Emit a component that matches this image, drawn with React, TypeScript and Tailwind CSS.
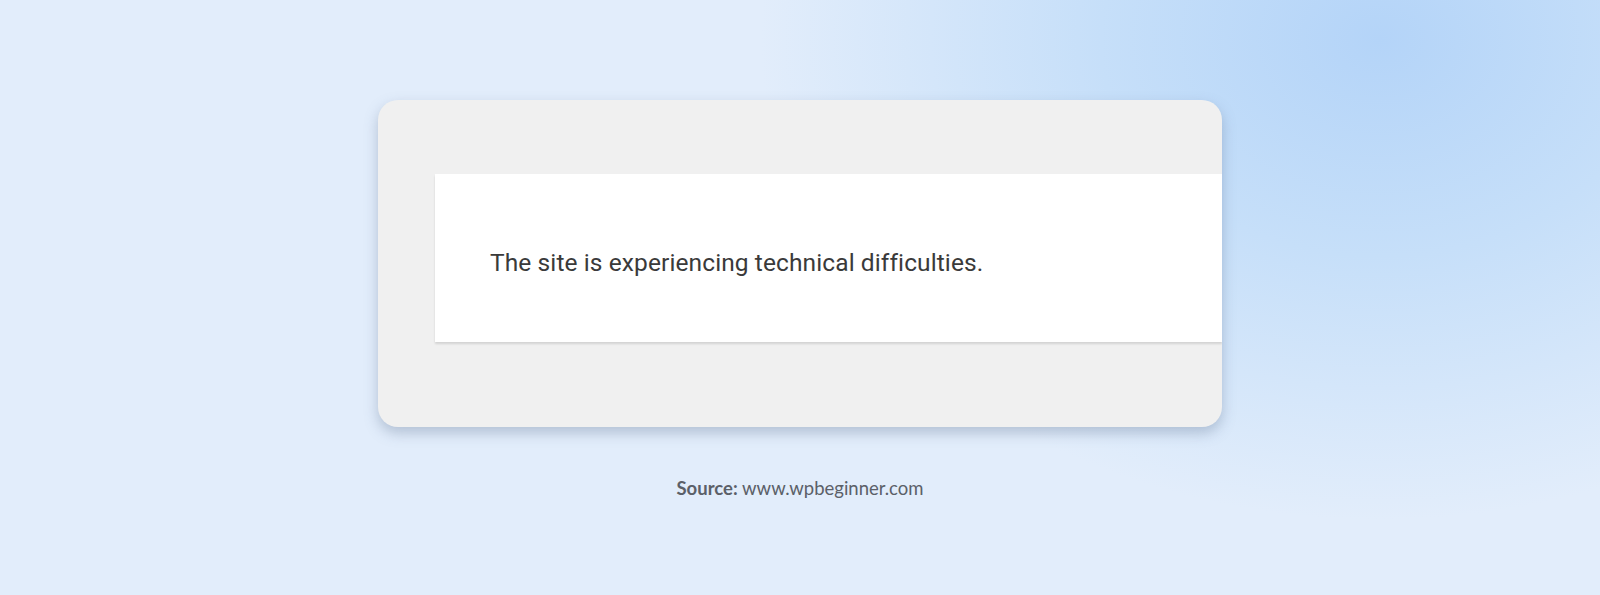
import React from 'react';

const App: React.FC = () => {
    return (
        <div className="relative w-[1600px] h-[595px] overflow-hidden bg-[#e2edfb]">
            {/* soft blue glow in the top right corner */}
            <div className="absolute inset-0 bg-[radial-gradient(ellipse_620px_480px_at_1380px_40px,#b4d4f8_0%,#c6dff9_45%,rgba(226,237,251,0)_100%)]" />

            <div className="relative flex flex-col items-center pt-[100px]">
                <div className="w-[844px] h-[327px] rounded-[20px] bg-[#f0f0f0] shadow-[0_6px_14px_rgba(90,110,140,0.35)] overflow-hidden pt-[74px] pl-[57px]">
                    <div className="h-[168px] bg-white shadow-[0_2px_2px_rgba(0,0,0,0.12)] flex items-center pl-[55px] pt-[10px]">
                        <p className="font-['Roboto',sans-serif] text-[24.5px] text-[#3a3a3a] tracking-[0.1px]">
                            The site is experiencing technical difficulties.
                        </p>
                    </div>
                </div>

                <p className="mt-[48px] font-['Lato',sans-serif] text-[18.5px] text-[#5b6068]">
                    <span className="font-bold">Source:</span> www.wpbeginner.com
                </p>
            </div>
        </div>
    );
};

export default App;
